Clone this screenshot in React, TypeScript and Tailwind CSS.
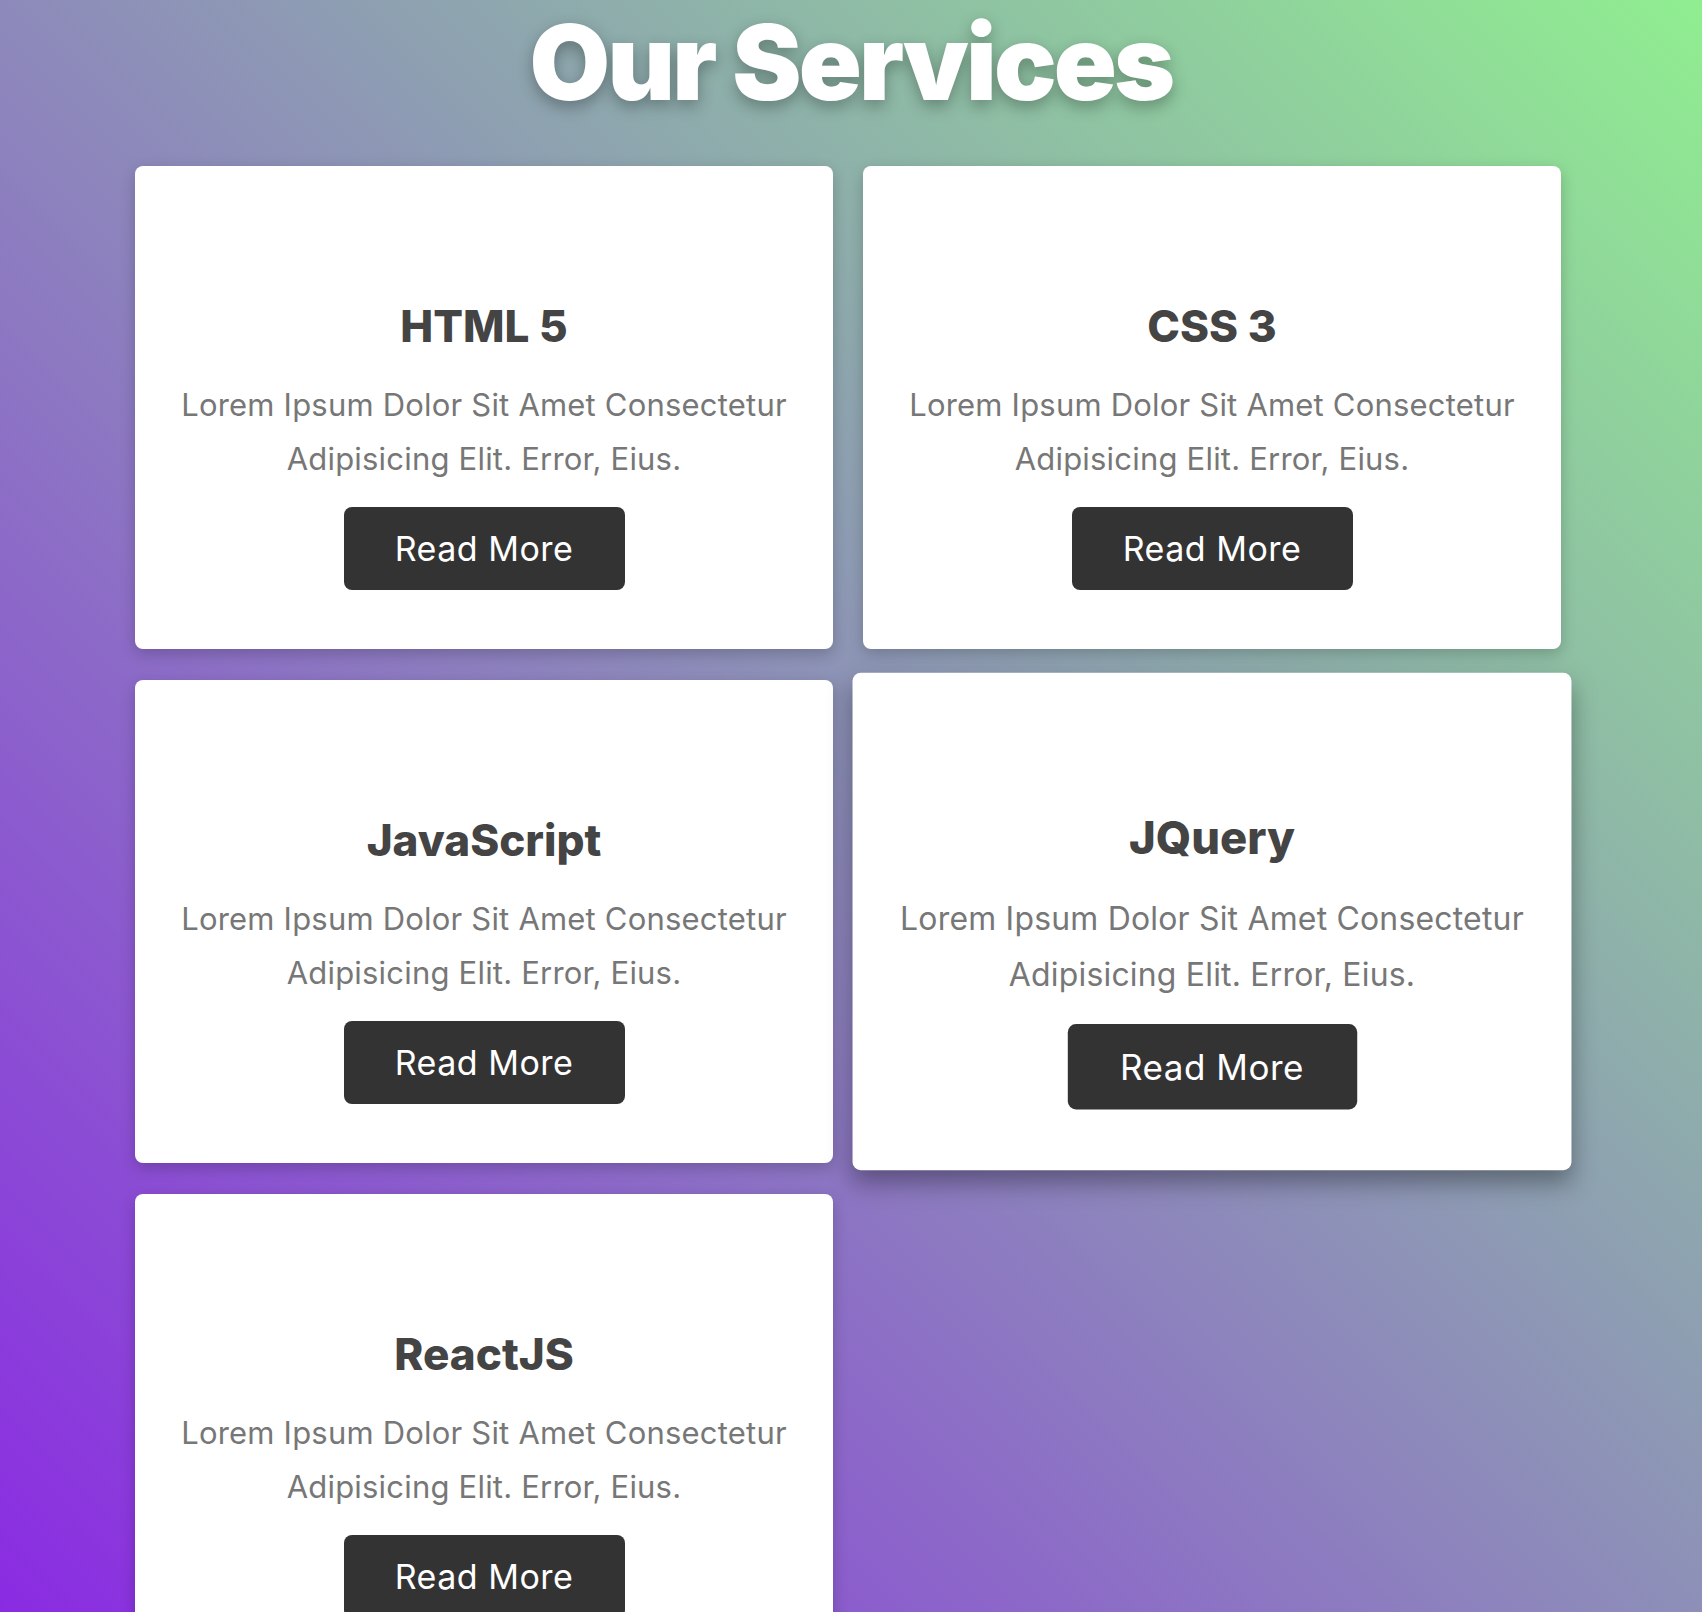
const services = ["HTML 5", "CSS 3", "JavaScript", "JQuery", "ReactJS"];

function ServiceCard({ title, active }: { title: string; active?: boolean }) {
  return (
    <div
      className={
        "flex flex-col items-center rounded-[8px] bg-white px-[30px] pt-[130px] pb-[59px] text-center " +
        (active
          ? "scale-[1.03] shadow-[0_12px_24px_rgba(0,0,0,0.35)]"
          : "shadow-[0_5px_15px_rgba(0,0,0,0.2)]")
      }
    >
      <h3 className="text-[44px] leading-[60px] font-extrabold text-[#444] capitalize">{title}</h3>
      <p className="mt-[22px] text-[31px] leading-[54px] tracking-[0.2px] text-[#777] capitalize">
        Lorem ipsum dolor sit amet consectetur
        <br />
        adipisicing elit. Error, eius.
      </p>
      <a
        href="#"
        className="mt-[21px] flex h-[83px] w-[281px] items-center justify-center rounded-[8px] bg-[#333] text-[34px] tracking-[0.5px] text-white"
      >
        Read More
      </a>
    </div>
  );
}

export default function App() {
  return (
    <main
      className="h-[1612px] overflow-hidden bg-[linear-gradient(45deg,#8a2be2,#90ee90)] pt-[7px]"
      style={{ fontFamily: "Inter, 'Open Sans', sans-serif" }}
    >
      <h1 className="text-center text-[104px] leading-[110px] font-black tracking-[-2.8px] text-white [text-shadow:0_6px_16px_rgba(0,0,0,0.3)]">
        Our Services
      </h1>
      <div className="mt-[49px] ml-[135px] grid w-[1426px] grid-cols-2 gap-x-[30px] gap-y-[31px]">
        {services.map((s) => (
          <ServiceCard key={s} title={s} active={s === "JQuery"} />
        ))}
      </div>
    </main>
  );
}
